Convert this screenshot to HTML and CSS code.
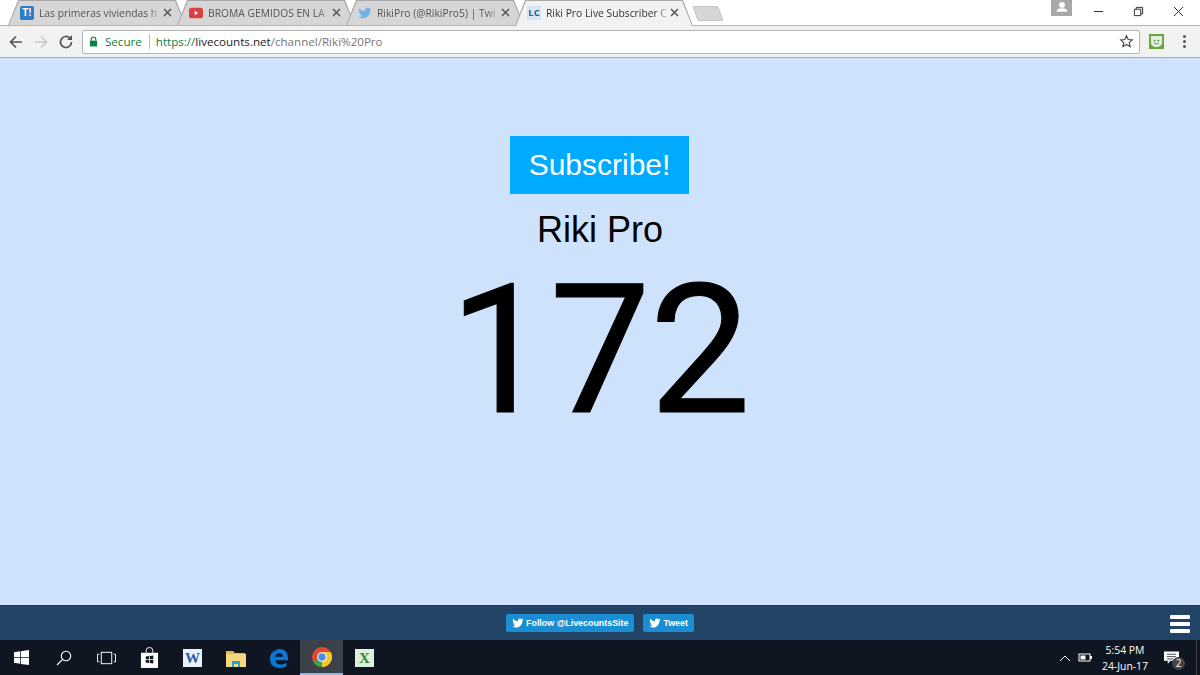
FILE: index.html
```html
<!DOCTYPE html>
<html lang="en">
<head>
  <meta charset="UTF-8">
  <title>Riki Pro Live Subscriber Count</title>
  <link rel="stylesheet" href="styles.css">
</head>
<body>
  <div class="tabstrip">
    <div class="tab">
      <span class="favicon fav-t">T!</span>
      <span class="tab-title">Las primeras viviendas h</span>
      <svg class="tab-close" viewBox="0 0 9 9"><path d="M1 1l7 7M8 1L1 8"/></svg>
    </div>
    <div class="tab">
      <svg class="favicon" viewBox="0 0 16 16"><rect x="0" y="2" width="16" height="12" rx="3" fill="#d9403f"/><path d="M6.500 5.500v5l4-2.500z" fill="#fff"/></svg>
      <span class="tab-title">BROMA GEMIDOS EN LA</span>
      <svg class="tab-close" viewBox="0 0 9 9"><path d="M1 1l7 7M8 1L1 8"/></svg>
    </div>
    <div class="tab">
      <svg class="favicon" viewBox="0 0 24 24"><path fill="#6fb3e8" d="M23 5c-.8.400-1.700.600-2.600.700.900-.600 1.600-1.400 2-2.500-.900.500-1.900.900-2.900 1.100A4.600 4.600 0 0 0 11.700 8.500C7.900 8.300 4.500 6.500 2.200 3.700c-1.200 2.100-.600 4.800 1.400 6.100-.700 0-1.400-.200-2.100-.600 0 2.200 1.600 4.100 3.700 4.600-.700.200-1.400.200-2.100.100.600 1.900 2.300 3.200 4.300 3.200A9.200 9.200 0 0 1 .6 19c2.100 1.300 4.500 2.100 7.100 2.100 8.600 0 13.500-7.300 13.200-13.800.900-.600 1.700-1.400 2.100-2.300z"/></svg>
      <span class="tab-title">RikiPro (@RikiPro5) | Twi</span>
      <svg class="tab-close" viewBox="0 0 9 9"><path d="M1 1l7 7M8 1L1 8"/></svg>
    </div>
    <div class="tab tab-active">
      <span class="favicon fav-lc">LC</span>
      <span class="tab-title">Riki Pro Live Subscriber C</span>
      <svg class="tab-close" viewBox="0 0 9 9"><path d="M1 1l7 7M8 1L1 8"/></svg>
    </div>
    <div class="tab-new"></div>
    <div class="window-controls">
      <span class="profile">
        <svg viewBox="0 0 20 20" width="18" height="18"><circle cx="10" cy="5.500" r="3.200" fill="#fff"/><path d="M4 13c0-2.500 2.500-3.800 6-3.800s6 1.300 6 3.800z" fill="#fff"/></svg>
      </span>
      <span class="win-btn"><svg viewBox="0 0 12 12"><path d="M1 6h10" stroke="#222" stroke-width="1"/></svg></span>
      <span class="win-btn"><svg viewBox="0 0 12 12"><path d="M1.500 3.500h7v7h-7zM3.500 3.500v-2h7v7h-2" fill="none" stroke="#222" stroke-width="1"/></svg></span>
      <span class="win-btn"><svg viewBox="0 0 12 12"><path d="M1 1l10 10M11 1L1 11" stroke="#222" stroke-width="1"/></svg></span>
    </div>
  </div>

  <div class="toolbar">
    <svg class="nav-icon" viewBox="0 0 16 16"><path d="M14 8H2.500M8 2.500L2.500 8 8 13.500" fill="none" stroke="#555" stroke-width="1.700"/></svg>
    <svg class="nav-icon" viewBox="0 0 16 16"><path d="M2 8h11.500M8 2.500L13.500 8 8 13.500" fill="none" stroke="#c8c8c8" stroke-width="1.700"/></svg>
    <svg class="nav-icon" viewBox="0 0 16 16"><path d="M13.500 8a5.500 5.500 0 1 1-1.600-3.900" fill="none" stroke="#555" stroke-width="1.700"/><path d="M14 1v5H9z" fill="#555"/></svg>
    <div class="omnibox">
      <svg class="lock" viewBox="0 0 10 12"><path d="M2.500 5V3.500a2.500 2.500 0 0 1 5 0V5" fill="none" stroke="#0b8043" stroke-width="1.300"/><rect x="1" y="5" width="8" height="6.500" fill="#0b8043"/></svg>
      <span class="secure">Secure</span>
      <span class="omni-sep"></span>
      <span class="url"><span class="url-https">https://</span><span class="url-host">livecounts.net</span>/channel/Riki%20Pro</span>
      <svg class="star" viewBox="0 0 16 16"><path d="M8 1.800l1.800 4.100 4.400.400-3.300 2.900 1 4.300L8 11.200l-3.900 2.300 1-4.300-3.300-2.900 4.400-.400z" fill="none" stroke="#444" stroke-width="1.200"/></svg>
    </div>
    <span class="ext-icon">
      <svg viewBox="0 0 14 14" width="13" height="13"><path d="M1 1h12v7c0 3-3 5-6 5s-6-2-6-5z" fill="#e4eee0"/><circle cx="5" cy="6" r="1" fill="#4f8a3a"/><circle cx="9" cy="6" r="1" fill="#4f8a3a"/><path d="M4.500 8.500c1 1.500 4 1.500 5 0" fill="none" stroke="#4f8a3a" stroke-width="1"/></svg>
    </span>
    <span class="menu-dots"><i></i><i></i><i></i></span>
  </div>

  <main class="page">
    <a class="subscribe" href="#">Subscribe!</a>
    <div class="channel-name">Riki Pro</div>
    <div class="count">172</div>
  </main>

  <div class="site-footer">
    <a class="tw-btn" href="#">
      <svg viewBox="0 0 24 24" width="12" height="12"><path fill="#fff" d="M23 5c-.8.400-1.700.600-2.600.700.900-.600 1.600-1.400 2-2.500-.900.500-1.900.900-2.900 1.100A4.600 4.600 0 0 0 11.700 8.500C7.900 8.300 4.500 6.500 2.200 3.700c-1.200 2.100-.600 4.800 1.400 6.100-.700 0-1.400-.200-2.100-.600 0 2.200 1.600 4.100 3.700 4.600-.700.200-1.400.200-2.100.100.600 1.900 2.300 3.200 4.300 3.200A9.200 9.200 0 0 1 .6 19c2.100 1.300 4.500 2.100 7.100 2.100 8.600 0 13.500-7.300 13.200-13.800.900-.600 1.700-1.400 2.100-2.300z"/></svg>
      Follow @LivecountsSite
    </a>
    <a class="tw-btn" href="#">
      <svg viewBox="0 0 24 24" width="12" height="12"><path fill="#fff" d="M23 5c-.8.400-1.700.600-2.600.700.900-.600 1.600-1.400 2-2.500-.900.500-1.900.900-2.900 1.100A4.600 4.600 0 0 0 11.700 8.500C7.900 8.300 4.500 6.500 2.200 3.700c-1.200 2.100-.600 4.800 1.400 6.100-.700 0-1.400-.200-2.100-.600 0 2.200 1.600 4.100 3.700 4.600-.700.200-1.400.200-2.100.100.600 1.900 2.300 3.200 4.300 3.200A9.200 9.200 0 0 1 .6 19c2.100 1.300 4.500 2.100 7.100 2.100 8.600 0 13.500-7.300 13.200-13.800.900-.600 1.700-1.400 2.100-2.300z"/></svg>
      Tweet
    </a>
    <span class="hamburger"><i></i><i></i><i></i></span>
  </div>

  <div class="taskbar">
    <div class="task-item">
      <svg viewBox="0 0 16 16" width="15" height="15"><path fill="#fff" d="M0 2.300l6.500-.9v6.200H0zM7.300 1.300L16 0v7.600H7.300zM0 8.400h6.500v6.200L0 13.700zM7.300 8.400H16V16l-8.700-1.200z"/></svg>
    </div>
    <div class="task-item">
      <svg viewBox="0 0 16 16" width="16" height="16"><circle cx="10" cy="6" r="4.700" fill="none" stroke="#fff" stroke-width="1.100"/><path d="M6.600 9.400L1 15" stroke="#fff" stroke-width="1.200"/></svg>
    </div>
    <div class="task-item">
      <svg viewBox="0 0 20 14" width="19" height="14"><rect x="4.500" y="1" width="11" height="12" fill="none" stroke="#fff"/><path d="M2.500 3H.5v8h2M17.500 3h2v8h-2" fill="none" stroke="#fff"/></svg>
    </div>
    <div class="task-item">
      <svg viewBox="0 0 20 22" width="19" height="21"><path d="M6.500 6V3.500a3.500 3 0 0 1 7 0V6" fill="none" stroke="#fff"/><path d="M1 6h18v16H1z" fill="#fff"/><path fill="#10151f" d="M6 10l3.600-.5v3.300H6zM10.400 9.400l3.600-.5v3.900h-3.600zM6 13.500h3.600v3.300L6 16.300zM10.400 13.500H14v3.900l-3.600-.5z"/></svg>
    </div>
    <div class="task-item">
      <span class="app-word">W</span>
    </div>
    <div class="task-item">
      <svg viewBox="0 0 20 18" width="20" height="18"><path d="M0 2h7l2 2h10v3H0z" fill="#e0b94c"/><path d="M0 5h20v13H0z" fill="#f5d77e"/><path d="M6 12h8v6h-2v-3H8v3H6z" fill="#2a9fd8"/></svg>
    </div>
    <div class="task-item">
      <svg viewBox="0 0 20 20" width="20" height="20"><path fill="#0a78d7" d="M10.500 1C15.800 1 19 4.800 19 10.500v1.700H6.300c.2 2.800 2.400 4.300 5.200 4.300 2.200 0 4.300-.700 6-1.800v3.600c-1.800 1-4 1.700-6.800 1.700C4.700 20 1 16.600 1 10.800 1 7 3 3.200 7 1.500 5.400 3 4.500 4.500 4.200 6 5.600 3 8 1 10.500 1zM6.300 8.800h7.600c0-2.400-1.400-3.700-3.500-3.700S6.600 6.500 6.300 8.800z"/></svg>
    </div>
    <div class="task-item task-active">
      <svg viewBox="0 0 20 20" width="20" height="20"><circle cx="10" cy="10" r="10" fill="#e0492f"/><path d="M10 10L1.300 15A10 10 0 0 0 10 20c1 0 1.500-.1 2-.2z" fill="#3ba34b"/><path d="M10 5h8.700A10 10 0 0 1 10 20z" fill="#f3c72e"/><circle cx="10" cy="10" r="4.800" fill="#fff"/><circle cx="10" cy="10" r="3.700" fill="#4a8fe0"/></svg>
    </div>
    <div class="task-item">
      <span class="app-excel">X</span>
    </div>
    <div class="tray">
      <svg class="tray-caret" viewBox="0 0 12 8" width="12" height="8"><path d="M1 7l5-5 5 5" fill="none" stroke="#fff"/></svg>
      <svg class="tray-battery" viewBox="0 0 14 9" width="14" height="9"><rect x="1" y="1" width="11" height="7" fill="none" stroke="#fff"/><rect x="2.500" y="2.500" width="5" height="4" fill="#fff"/><rect x="12" y="3" width="2" height="3" fill="#fff"/></svg>
      <div class="clock"><span>5:54 PM</span><span>24-Jun-17</span></div>
      <div class="notify">
        <svg viewBox="0 0 16 14" width="15" height="14"><path d="M0 0h16v10H7l-3 3v-3H0z" fill="#fff"/><path d="M3 3h10M3 5.500h10M3 8h7" stroke="#10151f" stroke-width=".8"/></svg>
        <span class="notify-badge">2</span>
      </div>
    </div>
  </div>
</body>
</html>
```

FILE: styles.css
```css
* {
  box-sizing: border-box;
  margin: 0;
  padding: 0;
}
html, body {
  height: 100%;
}
body {
  display: flex;
  flex-direction: column;
  height: 675px;
  overflow: hidden;
  font-family: "Open Sans", "Noto Sans", sans-serif;
  background-color: #cfe2fb;
  color: #333;
}

/* browser tabs */
.tabstrip {
  display: flex;
  align-items: flex-start;
  flex: none;
  height: 26px;
  padding-left: 8px;
  background-color: #fff;
  border-bottom: 1px solid #b5b5b5;
}
.tab {
  position: relative;
  display: flex;
  align-items: center;
  flex: none;
  gap: 5px;
  width: 178px;
  height: 25px;
  margin-right: -9px;
  padding-left: 12px;
  font-size: 10.300px;
  color: #555;
}
.tab::before, .tab::after {
  content: "";
  position: absolute;
  top: 0;
  bottom: 0;
  left: 0;
  right: 0;
  clip-path: polygon(0 100%, 10px 0, calc(100% - 10px) 0, 100% 100%);
}
.tab::before {
  background-color: #a9a9a9;
}
.tab::after {
  top: 1px;
  left: 1px;
  right: 1px;
  background-color: #d6d6d6;
}
.tab > * {
  position: relative;
  z-index: 1;
}
.tab-active {
  height: 26px;
  padding-bottom: 1px;
  color: #333;
  z-index: 2;
}
.tab-active::after {
  background-color: #f2f2f2;
}
.favicon {
  flex: none;
  width: 14px;
  height: 14px;
}
.fav-t {
  border-radius: 2px;
  background-color: #2e7cc6;
  color: #fff;
  font: bold 10px/14px "Liberation Sans", sans-serif;
  text-align: center;
}
.fav-lc {
  background-color: #d8e6f8;
  color: #2c5d94;
  font: bold 9.500px/14px "Open Sans", sans-serif;
  text-align: center;
}
.tab-title {
  flex: none;
  width: 124px;
  overflow: hidden;
  white-space: nowrap;
  -webkit-mask-image: linear-gradient(to right, #000 88%, transparent);
  mask-image: linear-gradient(to right, #000 88%, transparent);
}
.tab-close {
  flex: none;
  width: 9px;
  height: 9px;
  margin-left: -5px;
  fill: none;
  stroke: #555;
  stroke-width: 1.500;
}
.tab-new {
  flex: none;
  width: 26px;
  height: 15px;
  margin: 6px 0 0 11px;
  background-color: #d6d6d6;
  border: 1px solid #c4c4c4;
  border-radius: 2px;
  transform: skewX(20deg);
}
.window-controls {
  display: flex;
  align-items: flex-start;
  margin-left: auto;
  padding-right: 2px;
}
.profile {
  display: flex;
  justify-content: center;
  width: 21px;
  height: 16px;
  margin-right: 6px;
  background-color: #a8a8a8;
  overflow: hidden;
}
.win-btn {
  display: flex;
  justify-content: center;
  width: 40px;
  padding-top: 6px;
}
.win-btn svg {
  width: 11px;
  height: 11px;
}

/* address bar */
.toolbar {
  display: flex;
  align-items: center;
  flex: none;
  height: 32px;
  padding-left: 8px;
  background-color: #f2f2f2;
  border-bottom: 1px solid #a9a9a9;
}
.nav-icon {
  width: 16px;
  height: 16px;
  margin-right: 9px;
}
.omnibox {
  display: flex;
  align-items: center;
  width: 1058px;
  height: 24px;
  margin-left: -1px;
  padding: 0 5px 0 6px;
  background-color: #fff;
  border: 1px solid #b4b4b4;
  border-radius: 2px;
  font-size: 11.600px;
}
.lock {
  width: 9px;
  height: 11px;
  margin-right: 7px;
}
.secure {
  color: #0b8043;
}
.omni-sep {
  width: 1px;
  height: 15px;
  margin: 0 6px 0 7px;
  background-color: #bbb;
}
.url {
  color: #777;
}
.url-https {
  color: #0b8043;
}
.url-host {
  color: #222;
}
.star {
  width: 15px;
  height: 15px;
  margin-left: auto;
}
.ext-icon {
  display: flex;
  align-items: center;
  justify-content: center;
  width: 15px;
  height: 15px;
  margin-left: 9px;
  background-color: #66a83a;
}
.menu-dots {
  display: flex;
  flex-direction: column;
  gap: 2px;
  margin-left: 19px;
}
.menu-dots i {
  width: 3px;
  height: 3px;
  background-color: #555;
  border-radius: 50%;
}

/* page */
.page {
  flex: 1;
  display: flex;
  flex-direction: column;
  align-items: center;
  padding-top: 78px;
  background-color: #cfe2fb;
  font-family: "Liberation Sans", Arial, sans-serif;
  color: #000;
}
.subscribe {
  width: 179px;
  height: 58px;
  margin-right: 1px;
  background-color: #00aaff;
  color: #fff;
  font-size: 30px;
  line-height: 58px;
  text-align: center;
  text-decoration: none;
}
.channel-name {
  margin-top: 13px;
  font-size: 36px;
  line-height: 46px;
}
.count {
  margin-top: 18px;
  margin-right: 1px;
  font-family: Roboto, "Liberation Sans", sans-serif;
  font-size: 180px;
  letter-spacing: -1px;
  line-height: 160px;
  -webkit-text-stroke: 1px #000;
}

/* site footer */
.site-footer {
  position: relative;
  display: flex;
  justify-content: center;
  align-items: center;
  flex: none;
  gap: 9px;
  height: 35px;
  background-color: #224466;
  border-top: 1px solid #1d3c5a;
}
.tw-btn {
  display: flex;
  align-items: center;
  gap: 2px;
  height: 18px;
  padding: 0 6px;
  background-color: #1b8dd2;
  border-radius: 2px;
  color: #fff;
  font: bold 8.900px "Liberation Sans", Arial, sans-serif;
  text-decoration: none;
}
.hamburger {
  position: absolute;
  right: 10px;
  top: 9px;
  display: flex;
  flex-direction: column;
  gap: 3px;
}
.hamburger i {
  width: 20px;
  height: 4px;
  background-color: #fff;
  border-radius: 1px;
}

/* windows taskbar */
.taskbar {
  display: flex;
  flex: none;
  height: 35px;
  background-color: #0f1521;
}
.task-item {
  display: flex;
  align-items: center;
  justify-content: center;
  width: 43px;
}
.task-item:first-child {
  width: 42px;
}
.task-active {
  background-color: #3c4048;
  border-bottom: 2px solid #8fb8e8;
}
.app-word, .app-excel {
  display: block;
  width: 19px;
  height: 18px;
  font: bold 15px/18px "Liberation Serif", serif;
  text-align: center;
}
.app-word {
  background-color: #eaf1fb;
  color: #2a5caa;
}
.app-excel {
  background-color: #dff0d8;
  color: #2f8a3f;
}
.tray {
  display: flex;
  align-items: center;
  margin-left: auto;
  padding-right: 3px;
  color: #fff;
}
.tray-caret {
  margin-right: 7px;
}
.tray-battery {
  margin-right: 2px;
}
.clock {
  display: flex;
  flex-direction: column;
  align-items: center;
  width: 62px;
  font-size: 10.400px;
  line-height: 16px;
}
.notify {
  position: relative;
  display: flex;
  align-items: center;
  width: 41px;
  height: 35px;
  padding-left: 8px;
  border-right: 1px solid #444;
}
.notify-badge {
  position: absolute;
  left: 16px;
  top: 17px;
  width: 13px;
  height: 13px;
  border-radius: 50%;
  background-color: #444;
  font-size: 10px;
  line-height: 13px;
  text-align: center;
}
```
